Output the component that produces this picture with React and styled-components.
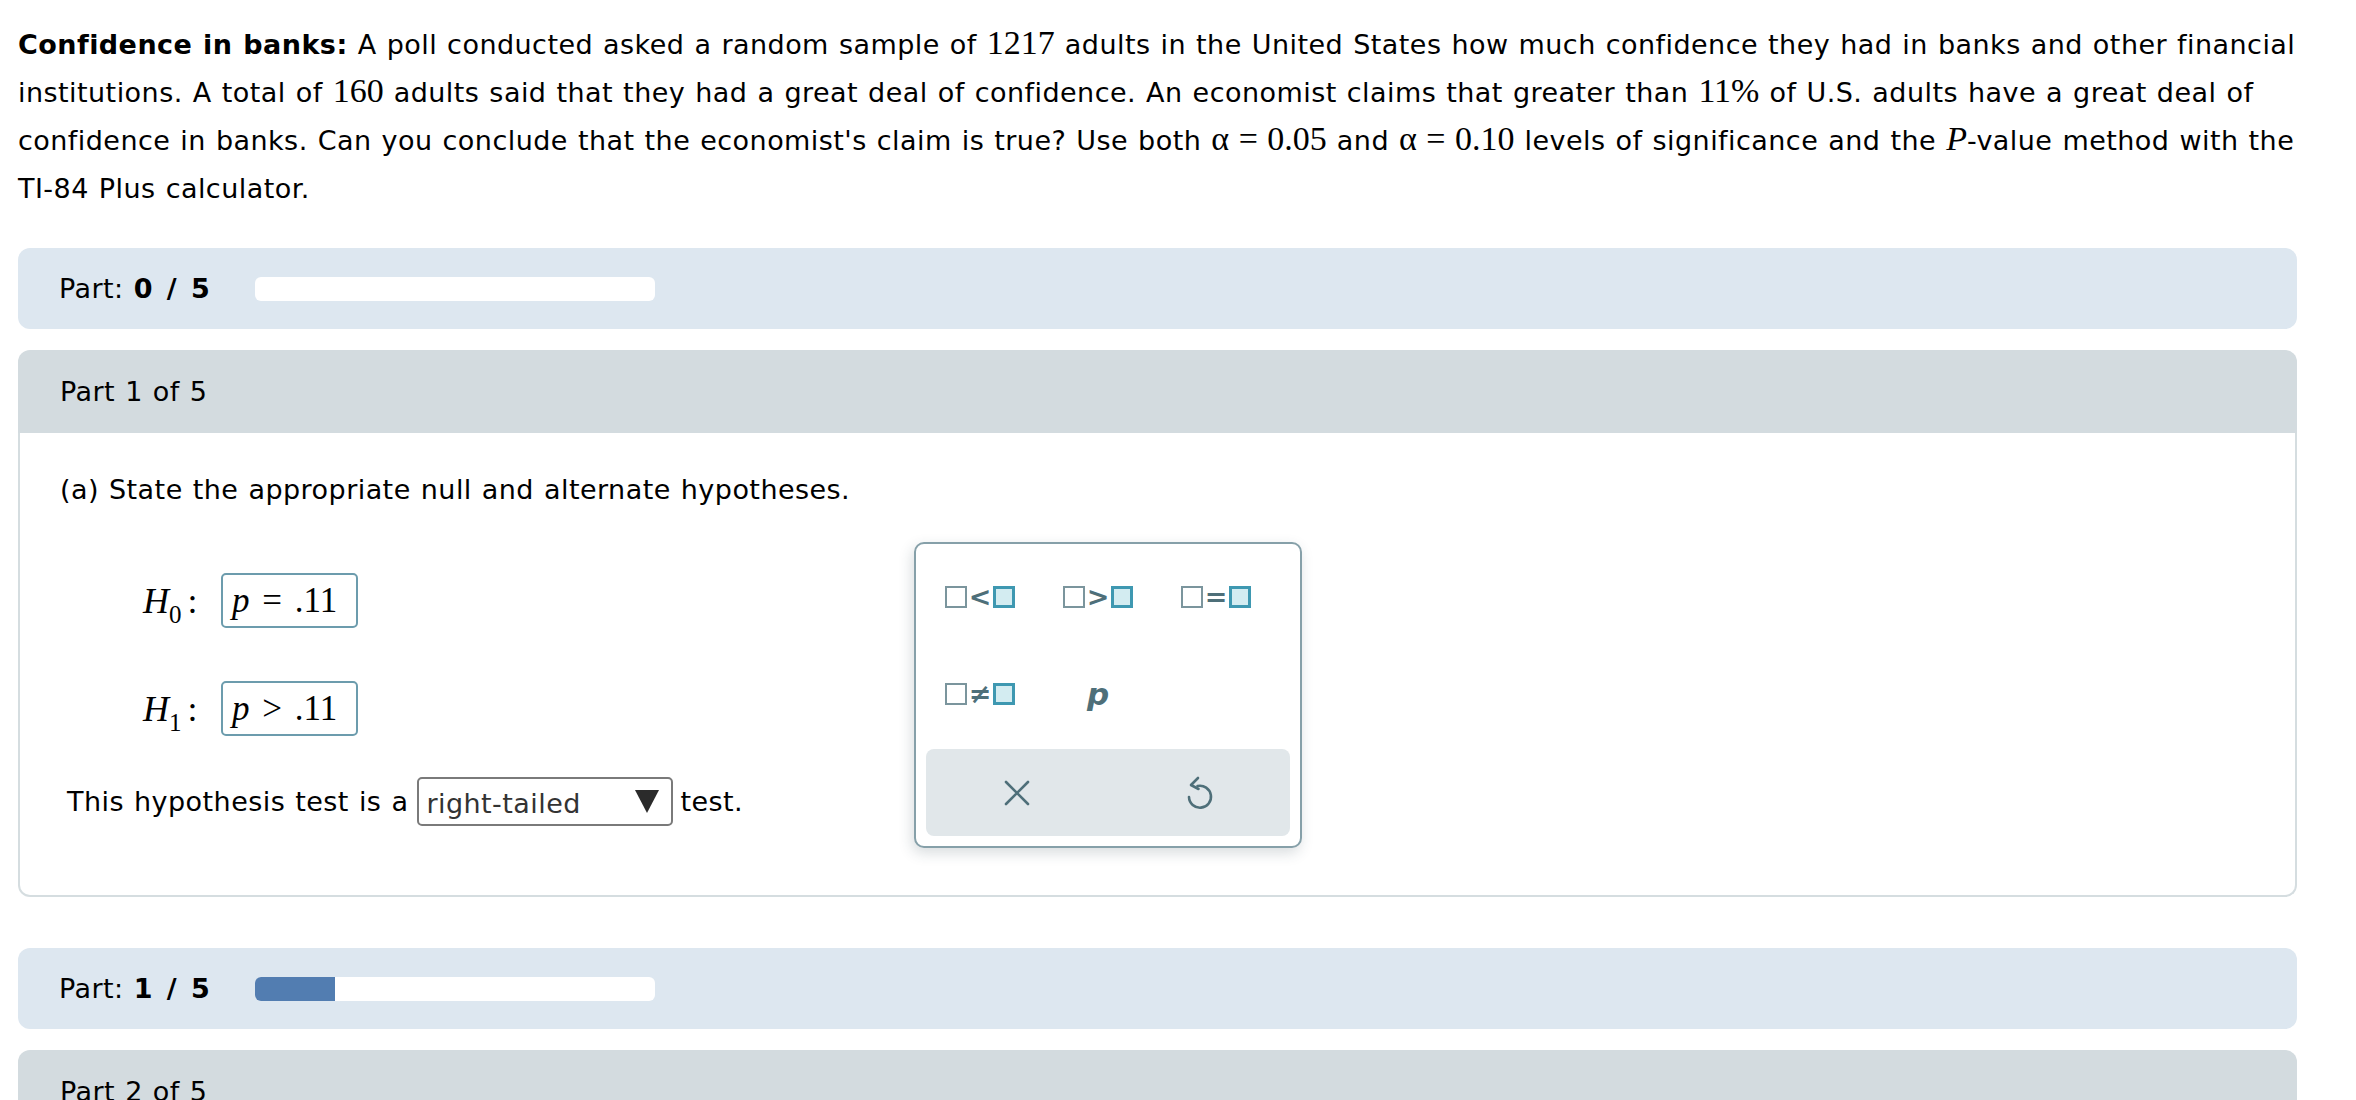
import React from 'react';
import styled, { createGlobalStyle } from 'styled-components';

const GlobalStyle = createGlobalStyle`
  body {
    margin: 0;
    background: #ffffff;
    color: #000000;
    font-family: Verdana, "DejaVu Sans", sans-serif;
    letter-spacing: 0.45px;
    word-spacing: 1px;
  }
`;

const Page = styled.div`
  padding: 21px 59px 0 18px;
`;

const Problem = styled.p`
  margin: 0;
  font-size: 27px;
  line-height: 48px;
`;

const Math = styled.span`
  font-family: "Liberation Serif", "DejaVu Serif", serif;
  font-size: 34px;
  line-height: 1;
  letter-spacing: 0;
  font-style: ${(p) => (p.$italic ? 'italic' : 'normal')};
`;

const ProgressPanel = styled.div`
  margin-top: ${(p) => p.$top}px;
  height: 81px;
  background: #dde7f0;
  border-radius: 12px;
  display: flex;
  align-items: center;
  padding-left: 41px;
  font-size: 27px;
`;

const ProgressLabel = styled.span`
  width: 196px;
  white-space: nowrap;

  b {
    word-spacing: 4px;
  }
`;

const Track = styled.div`
  width: 400px;
  height: 24px;
  background: #ffffff;
  border-radius: 6px;
  overflow: hidden;
`;

const Fill = styled.div`
  height: 100%;
  background: #527db1;
`;

const PartCard = styled.section`
  margin-top: 21px;
`;

const PartHeader = styled.div`
  height: 83px;
  background: #d3dbdf;
  border-radius: 12px 12px 0 0;
  display: flex;
  align-items: center;
  padding-left: 42px;
  font-size: 27px;
`;

const PartBody = styled.div`
  box-sizing: border-box;
  height: 464px;
  border: 2px solid #d5dde0;
  border-top: 0;
  border-radius: 0 0 12px 12px;
  padding: 33px 40px 0 40px;
`;

const Prompt = styled.div`
  font-size: 27px;
  line-height: 48px;
`;

const Workspace = styled.div`
  display: flex;
  align-items: flex-start;
  margin-top: 28px;
`;

const AnswerColumn = styled.div`
  width: 854px;
  padding-top: 31px;
`;

const HypRow = styled.div`
  display: flex;
  align-items: center;
  height: 55px;
  padding-left: 83px;
  margin-bottom: ${(p) => p.$gap || 0}px;
`;

const HypLabel = styled.span`
  width: 78px;
  font-family: "Liberation Serif", serif;
  font-size: 36px;
  letter-spacing: 0;
  white-space: nowrap;

  i {
    font-style: italic;
  }

  sub {
    font-size: 25px;
    vertical-align: -10px;
    line-height: 0;
    margin-right: 6px;
  }
`;

const AnswerBox = styled.div`
  box-sizing: border-box;
  width: 137px;
  height: 55px;
  border: 2px solid #6c9cad;
  border-radius: 5px;
  padding-left: 9px;
  display: flex;
  align-items: center;
  font-family: "Liberation Serif", serif;
  font-size: 35px;
  letter-spacing: 0;
  word-spacing: 4px;
  white-space: pre;

  i {
    font-style: italic;
  }
`;

const TestRow = styled.div`
  display: flex;
  align-items: center;
  margin-top: 41px;
  padding-left: 7px;
  font-size: 27px;
`;

const Select = styled.div`
  box-sizing: border-box;
  width: 256px;
  height: 49px;
  margin: 0 7px 0 9px;
  border: 2px solid #7a7a7a;
  border-radius: 5px;
  display: flex;
  align-items: center;
  justify-content: space-between;
  padding: 4px 12px 0 7px;
  color: #333333;
`;

const Caret = styled.span`
  width: 0;
  height: 0;
  border-left: 12px solid transparent;
  border-right: 12px solid transparent;
  border-top: 23px solid #2b2b2b;
  margin-top: -4px;
`;

const Palette = styled.div`
  box-sizing: border-box;
  width: 388px;
  height: 306px;
  border: 2px solid #86a0a9;
  border-radius: 10px;
  background: #ffffff;
  box-shadow: -2px 5px 14px rgba(40, 60, 70, 0.18);
`;

const KeyGrid = styled.div`
  display: grid;
  grid-template-columns: repeat(3, 118px);
  grid-template-rows: repeat(2, 97px);
  padding: 4px 0 0 5px;
`;

const Key = styled.button`
  border: 0;
  background: transparent;
  display: flex;
  align-items: center;
  justify-content: center;
  padding: 0;
  color: #4e6f79;
  cursor: pointer;
`;

const Sq = styled.span`
  box-sizing: border-box;
  width: 22px;
  height: 22px;
  border: ${(p) => (p.$filled ? '3px solid #3e98b1' : '2.5px solid #7b959d')};
  background: ${(p) => (p.$filled ? '#d3ecf1' : 'transparent')};
`;

const Sym = styled.span`
  width: 26px;
  text-align: center;
  font-family: "DejaVu Sans", sans-serif;
  font-weight: bold;
  font-size: 27px;
  line-height: 22px;
  letter-spacing: 0;
  color: #4e6f79;
`;

const VarKey = styled.span`
  font-family: "DejaVu Sans", sans-serif;
  font-weight: bold;
  font-style: italic;
  font-size: 31px;
  color: #4e6f79;
`;

const Footer = styled.div`
  margin: 7px 10px 10px 10px;
  height: 87px;
  border-radius: 8px;
  background: #e1e7ea;
  display: grid;
  grid-template-columns: 1fr 1fr;
`;

const Relation = ({ sym }) => (
  <Key>
    <Sq />
    <Sym>{sym}</Sym>
    <Sq $filled />
  </Key>
);

const CloseIcon = () => (
  <svg width="26" height="26" viewBox="0 0 26 26" fill="none" stroke="#4e6f79" strokeWidth="2.6" strokeLinecap="round">
    <path d="M2 2 L24 24 M24 2 L2 24" />
  </svg>
);

const ResetIcon = () => (
  <svg width="28" height="34" viewBox="0 0 28 34" fill="none" stroke="#4e6f79" strokeWidth="2.6" strokeLinecap="round" strokeLinejoin="round">
    <path d="M4 21 A11 11 0 1 0 12.5 10" />
    <path d="M13 2 L6 9 L13.5 13" />
  </svg>
);

const Progress = ({ done, total, top }) => (
  <ProgressPanel $top={top}>
    <ProgressLabel>
      Part: <b>{done} / {total}</b>
    </ProgressLabel>
    <Track>
      <Fill style={{ width: `${(done / total) * 100}%` }} />
    </Track>
  </ProgressPanel>
);

export default function App() {
  return (
    <Page>
      <GlobalStyle />
      <Problem>
        <b>Confidence in banks:</b> A poll conducted asked a random sample of <Math>1217</Math> adults in the
        United States how much confidence they had in banks and other financial
        <br />
        institutions. A total of <Math>160</Math> adults said that they had a great deal of confidence. An
        economist claims that greater than <Math>11%</Math> of U.S. adults have a great deal of
        <br />
        confidence in banks. Can you conclude that the economist's claim is true? Use both{' '}
        <Math>α = 0.05</Math> and <Math>α = 0.10</Math> levels of significance and the <Math $italic>P</Math>-value
        method with the
        <br />
        TI-84 Plus calculator.
      </Problem>

      <Progress done={0} total={5} top={35} />

      <PartCard>
        <PartHeader>Part 1 of 5</PartHeader>
        <PartBody>
          <Prompt>(a) State the appropriate null and alternate hypotheses.</Prompt>
          <Workspace>
            <AnswerColumn>
              <HypRow $gap={53}>
                <HypLabel>
                  <i>H</i>
                  <sub>0</sub>:
                </HypLabel>
                <AnswerBox>
                  <i>p</i> = .11
                </AnswerBox>
              </HypRow>
              <HypRow>
                <HypLabel>
                  <i>H</i>
                  <sub>1</sub>:
                </HypLabel>
                <AnswerBox>
                  <i>p</i> &gt; .11
                </AnswerBox>
              </HypRow>
              <TestRow>
                This hypothesis test is a
                <Select>
                  right-tailed
                  <Caret />
                </Select>
                test.
              </TestRow>
            </AnswerColumn>

            <Palette>
              <KeyGrid>
                <Relation sym="<" />
                <Relation sym=">" />
                <Relation sym="=" />
                <Relation sym="≠" />
                <Key>
                  <VarKey>p</VarKey>
                </Key>
              </KeyGrid>
              <Footer>
                <Key>
                  <CloseIcon />
                </Key>
                <Key>
                  <ResetIcon />
                </Key>
              </Footer>
            </Palette>
          </Workspace>
        </PartBody>
      </PartCard>

      <Progress done={1} total={5} top={51} />

      <PartCard>
        <PartHeader>Part 2 of 5</PartHeader>
      </PartCard>
    </Page>
  );
}
